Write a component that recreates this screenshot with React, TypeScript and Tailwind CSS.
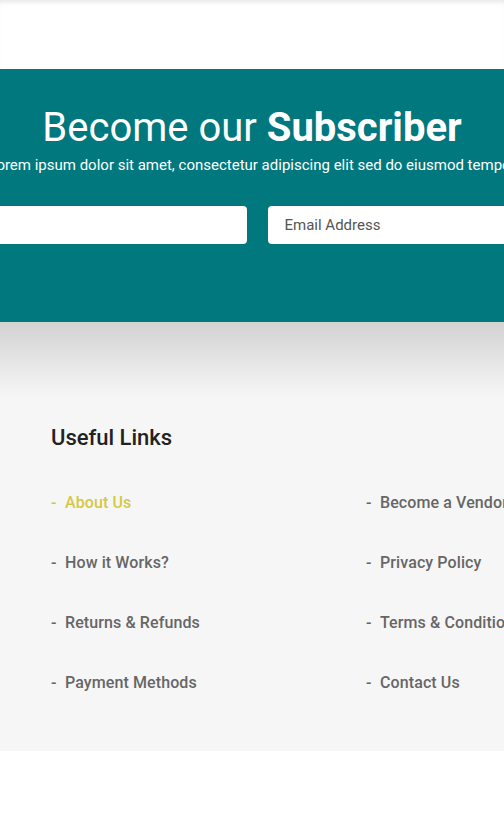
const links = [
  ['About Us', 'Become a Vendor'],
  ['How it Works?', 'Privacy Policy'],
  ['Returns & Refunds', 'Terms & Conditions'],
  ['Payment Methods', 'Contact Us'],
]

function LinkItem({ label, active }: { label: string; active?: boolean }) {
  return (
    <a href="#" className={active ? 'flex text-[#d4c845]' : 'flex text-[#666]'}>
      <span className="w-[14px]">-</span>
      <span className="tracking-[0.1px]">{label}</span>
    </a>
  )
}

export default function App() {
  return (
    <div className="min-h-[831px] bg-white overflow-hidden font-['Roboto',sans-serif]">
      {/* top spacer under header */}
      <div className="h-[69px] bg-white shadow-[inset_0_5px_5px_-3px_rgba(0,0,0,0.10)]" />

      {/* Subscribe */}
      <section className="h-[253px] bg-[#00787d] text-white pt-[34px]">
        <div className="flex justify-center">
          <h2 className="whitespace-nowrap text-[40px] leading-[50px] font-normal">
            Become our <span className="font-bold">Subscriber</span>
          </h2>
        </div>
        <div className="flex justify-center">
          <p className="whitespace-nowrap text-[15px] leading-[24px]">
            Lorem ipsum dolor sit amet, consectetur adipiscing elit sed do eiusmod tempor
          </p>
        </div>
        <div className="flex justify-center mt-[29px]">
          <div className="flex shrink-0 gap-[21px] w-[621px]">
            <input
              type="text"
              className="w-[305px] h-[38px] rounded-[4px] bg-white px-[18px] text-[15px] text-[#555] outline-none"
            />
            <input
              type="email"
              placeholder="Email Address"
              className="w-[295px] h-[38px] rounded-[4px] bg-white px-[17px] text-[15px] text-[#555] placeholder:text-[#555] outline-none"
            />
          </div>
        </div>
      </section>

      {/* Footer links */}
      <section className="bg-[linear-gradient(to_bottom,#d2d2d2,#f6f6f6_75px)] pt-[102px] pb-[56px] px-[51px]">
        <h3 className="text-[22px] leading-[28px] font-medium text-[#222]">Useful Links</h3>
        <ul className="mt-[39px] flex flex-col gap-[36px]">
          {links.map(([a, b], i) => (
            <li key={a} className="grid grid-cols-[315px_1fr] text-[16px] leading-[24px] font-medium whitespace-nowrap">
              <LinkItem label={a} active={i === 0} />
              <LinkItem label={b} />
            </li>
          ))}
        </ul>
      </section>
    </div>
  )
}
